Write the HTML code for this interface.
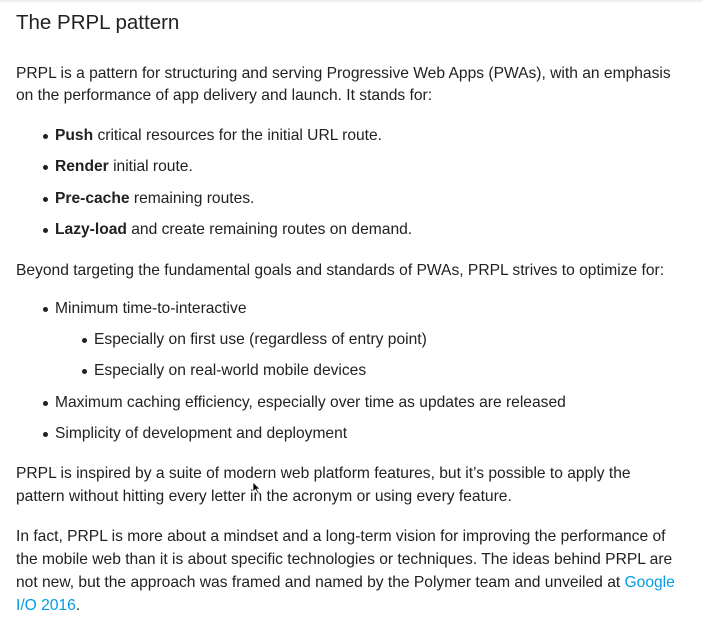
<!DOCTYPE html>
<html><head><meta charset="utf-8"><style>
html,body{margin:0;padding:0;background:#fff;width:703px;height:621px;overflow:hidden;}
body{font-family:"Liberation Sans",Arial,sans-serif;color:#202124;font-size:15.6px;position:relative;}
.l{position:absolute;white-space:nowrap;line-height:22px;height:22px;}
.b::before{content:"";position:absolute;left:-12px;top:9px;width:5px;height:5px;border-radius:50%;background:#202124;}
h1{position:absolute;left:16px;top:9px;margin:0;font-weight:400;font-size:20.5px;line-height:28px;color:#202124;}
a{color:#039be5;text-decoration:none;}
.top{position:absolute;left:0;top:0;width:703px;height:3px;background:linear-gradient(#e8e8e8,#fff);}
</style></head><body>
<div class="top"></div>
<h1>The PRPL pattern</h1>
<div class="l" style="left:16px;top:63px">PRPL is a pattern for structuring and serving Progressive Web Apps (PWAs), with an emphasis</div>
<div class="l" style="left:16px;top:85px">on the performance of app delivery and launch. It stands for:</div>
<div class="l b" style="left:55px;top:125px"><b>Push</b> critical resources for the initial URL route.</div>
<div class="l b" style="left:55px;top:156px"><b>Render</b> initial route.</div>
<div class="l b" style="left:55px;top:188px"><b>Pre-cache</b> remaining routes.</div>
<div class="l b" style="left:55px;top:219px"><b>Lazy-load</b> and create remaining routes on demand.</div>
<div class="l" style="left:16px;top:260px">Beyond targeting the fundamental goals and standards of PWAs, PRPL strives to optimize for:</div>
<div class="l b" style="left:55px;top:298px">Minimum time-to-interactive</div>
<div class="l b" style="left:94px;top:329px">Especially on first use (regardless of entry point)</div>
<div class="l b" style="left:94px;top:360px">Especially on real-world mobile devices</div>
<div class="l b" style="left:55px;top:392px">Maximum caching efficiency, especially over time as updates are released</div>
<div class="l b" style="left:55px;top:423px">Simplicity of development and deployment</div>
<div class="l" style="left:16px;top:463px">PRPL is inspired by a suite of modern web platform features, but it’s possible to apply the</div>
<div class="l" style="left:16px;top:486px">pattern without hitting every letter in the acronym or using every feature.</div>
<div class="l" style="left:16px;top:526px">In fact, PRPL is more about a mindset and a long-term vision for improving the performance of</div>
<div class="l" style="left:16px;top:549px">the mobile web than it is about specific technologies or techniques. The ideas behind PRPL are</div>
<div class="l" style="left:16px;top:572px">not new, but the approach was framed and named by the Polymer team and unveiled at <a>Google</a></div>
<div class="l" style="left:16px;top:595px"><a>I/O 2016</a>.</div>
<svg style="position:absolute;left:252px;top:481px" width="9" height="13" viewBox="0 0 9 13"><path d="M1 1 L1 11 L3.5 8.5 L5.5 12.5 L7 11.8 L5 8 L8 8 Z" fill="#000" stroke="#fff" stroke-width="0.8"/></svg>
</body></html>
